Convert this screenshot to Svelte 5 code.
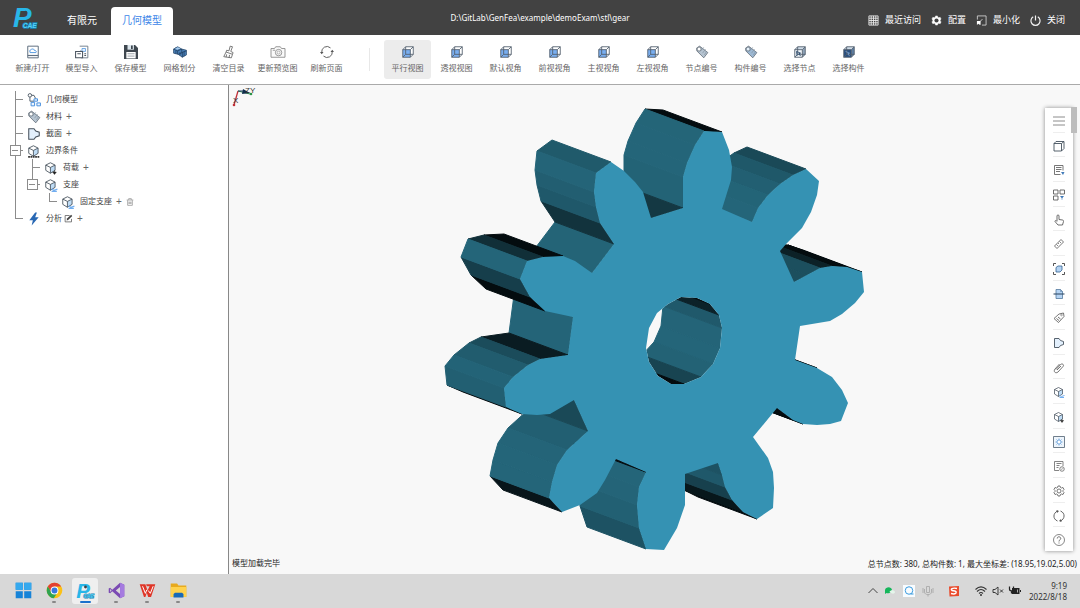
<script>
  const cube = (front, top = 'none', side = 'none') => `
    <path d="M3 8 8 3h13v13l-5 5H3z" fill="#fff"/>
    <path d="M16 8l5-5v13l-5 5z" fill="${side}"/><path d="M3 8l5-5h13l-5 5z" fill="${top}"/>
    <path d="M3 8h13v13H3z" fill="${front}"/>
    <path d="M3 8 8 3h13v13l-5 5H3zM3 8h13v13M16 8l5-5M8 3v13h13M8 16l-5 5" fill="none" stroke="#53606e" stroke-width="1.5"/>`;

  const isoCube = `
    <path d="M3 7l8-4 8 4v9l-8 5-8-5z" fill="#fff"/><path d="M11 11l8-4v9l-8 5z" fill="#bfdcf5"/>
    <path d="M3 7l8-4 8 4v9l-8 5-8-5zM3 7l8 4 8-4M11 11v10" fill="none" stroke="#47525d" stroke-width="1.5"/>`;

  const tag = (fill, hole) => `
    <path d="M3 5l5-3 14 11-7 9L3 10z" fill="${fill}" stroke="#5a6570" stroke-width="1.3"/>
    <path d="M9 11l6-7M13 14l5-7M16 17l4-6" stroke="#8493a2" stroke-width="1.2"/>
    <circle cx="7" cy="7" r="3.4" fill="${hole}" stroke="#5a6570" stroke-width="1.2"/>`;

  const section = '<path d="M3 3h9l3 4 6 2v6l-6 2-3 4H3z" fill="#e3f0fd" stroke="#46515d" stroke-width="1.8"/>';
  const cog = 'M10 2h4l1 3 2 1 3-1 2 4-2 2v2l2 2-2 4-3-1-2 1-1 3h-4l-1-3-2-1-3 1-2-4 2-2v-2L2 9l2-4 3 1 2-1z';
  const refresh = '<path d="M3 13a9 9 0 0 1 15-8M21 11a9 9 0 0 1-15 8" fill="none" stroke="#555" stroke-width="1.6"/><path d="M0 12h6l-3 4zM18 12h6l-3-4z" fill="#555"/>';

  const logo = `
    <g font-family="Liberation Sans" font-weight="bold" font-style="italic">
      <text x="-1" y="22" font-size="29" fill="#28b6e8">P</text>
      <circle cx="12" cy="7" r="2" fill="#38424a"/>
      <text x="9" y="23" font-size="7" fill="#55d0f5" stroke="#1683b5" stroke-width="1.5" paint-order="stroke">CAE</text>
    </g>`;

  const icons = {
    open: '<path d="M3 2h18v20H3z" fill="#fff" stroke="#5f6f80" stroke-width="1.7"/><path d="M7 13c-2-5 2-5 3-6 3-1 4 1 4 2 4 0 4 3 3 4z" fill="#fff" stroke="#4c94df" stroke-width="1.6"/><path d="M3 18h18" stroke="#5f6f80" stroke-width="2"/>',
    import: '<path d="M8 2h14v20H10V9" fill="#fff" stroke="#667481" stroke-width="1.5"/><path d="M12 6h6v5h-6z" fill="#e8f3ff" stroke="#4c94df" stroke-width="1.3"/><path d="M1 11h12v11H1z" fill="#fff" stroke="#4b5560" stroke-width="1.8"/><path d="M4 15h6M16 15h3M16 18h3" stroke="#4b5560" stroke-width="2"/>',
    save: '<path d="M0 0h19l5 5v19H0z" fill="#3f474f"/><path d="M6 0h11v8H6z" fill="#dce6ed"/><path d="M12 1h3v6h-3z" fill="#3f474f"/><path d="M4 12h16v11H4z" fill="#fff"/><path d="M6 15h12M6 19h12" stroke="#8a929a" stroke-width="1.4"/>',
    mesh: '<path d="M1 7l7-4 7 4 8 2v8l-7 4-7-5-8-2z" fill="#4a80b8" stroke="#28486a" stroke-width="1.3"/><path d="M1 7l7 3 7-3M8 10v6M15 7v6l8-3M9 16l7-3v8M4 5l7 3M5 9v6M19 11v8M12 12v6" fill="none" stroke="#1d3a59" stroke-width="1.2"/><path d="M8 4l5 2-5 2-5-1z" fill="#a9cdef"/>',
    clean: '<path d="M14 2l4 1-3 8 4 2-1 3L7 12l1-3 4 1z" fill="#fff" stroke="#6a6a6a" stroke-width="1.5"/><path d="M7 12l-4 8 13 2 2-6M8 16l-1 5M13 17l-1 5" fill="none" stroke="#6a6a6a" stroke-width="1.5"/>',
    camera: '<path d="M0 6h6l2-3h8l2 3h6v15H0z" fill="#fafafa" stroke="#8a8a8a" stroke-width="1.5"/><circle cx="13" cy="13" r="5.5" fill="none" stroke="#8a8a8a" stroke-width="1.5"/><circle cx="13" cy="13" r="2.5" fill="none" stroke="#8a8a8a"/><path d="M3 9h4" stroke="#8a8a8a" stroke-width="1.4"/>',
    refresh,
    view: cube('#79aef0'),
    nodeTag: tag('#b6c4d1', '#fff'),
    partTag: tag('#9db9d4', '#e6f1fb'),
    pickNode: cube('#f2f6fa', '#cfdce8', '#8ea3b8') + '<path d="M6 11l7 3-3 1 3 4M6 11l1 7 2-2" fill="none" stroke="#2d4d70" stroke-width="1.6"/>',
    pickPart: cube('#284f80', '#cfdce8', '#5c7da1') + '<path d="M6 11l7 3-3 1 3 4" fill="none" stroke="#8fb2db" stroke-width="1.2"/>',
    recent: '<path d="M2 2h20v20H2zM7 2v20M12 2v20M17 2v20M2 7h20M2 12h20M2 17h20" fill="none" stroke="#ececec" stroke-width="1.9"/>',
    config: `<path d="${cog}" fill="#fff" stroke="#fff"/><circle cx="12" cy="12" r="4.5" fill="#424242"/>`,
    minimize: '<path d="M3 10V2h19v20h-9" fill="none" stroke="#d8d8d8" stroke-width="1.8"/><path d="M2 13h8v8H8l-3-2-3 3z" fill="#fff"/><path d="M9 14l5-5" stroke="#fff" stroke-width="1.6"/>',
    power: '<path d="M7 4a10 10 0 1 0 10 0M12 1v11" fill="none" stroke="#f2f2f2" stroke-width="2.6"/>',
    geometry: '<circle cx="5" cy="4" r="3" fill="#fff" stroke="#4d5a66" stroke-width="1.6"/><path d="M5 7v7h7M8 4h4l3 6" fill="none" stroke="#4d5a66" stroke-width="1.6"/><path d="M12 10h6v4h-6zM7 16h6v6H7zM17 17h6v5h-6z" fill="#eef6ff" stroke="#4a91de" stroke-width="1.7"/>',
    section,
    boundary: isoCube + '<path d="M2 22h20" stroke="#333" stroke-width="3" stroke-dasharray="3 1"/>',
    load: isoCube + '<path d="M18 16v4M15 19h6l-3 4z" fill="#222" stroke="#222"/>',
    support: isoCube + '<path d="M13 19l4 2 6-2M13 23h9" fill="none" stroke="#72aef0" stroke-width="2"/>',
    bolt: '<path d="M14 1 4 14h6L8 23 20 9h-6l3-8z" fill="#2868b4"/>',
    edit: '<path d="M15 4H3v17h17v-8" fill="none" stroke="#555" stroke-width="2"/><path d="M7 17l1-5L19 2l3 3-11 11z" fill="#444"/>',
    trash: '<path d="M2 6h20M8 5V2h8v3M5 7v15h14V7M9 11v7M12 11v7M15 11v7" fill="none" stroke="#777" stroke-width="1.8"/>',
    menu: '<path d="M0 4h24M0 12h24M0 20h24" stroke="#707070" stroke-width="1.6"/>',
    box: '<path d="M2 7h15v15H2zM2 7l4-4h16l-5 4M22 3v14l-5 5" fill="#fff" stroke="#45525f" stroke-width="1.8"/>',
    list: '<path d="M20 13V3H3v18h12M6 7h11M6 11h11M6 15h8" fill="none" stroke="#555" stroke-width="1.6"/><path d="M16 16h7l-3 6z" fill="#3f79b8"/>',
    grid: '<path d="M1 2h9v8H1zM14 2h9v8h-9zM1 14h9v8H1z" fill="#fff" stroke="#555" stroke-width="1.7"/><path d="M14 14h8l-4 5z" fill="#3f79b8"/><path d="M18 17v5" stroke="#3f79b8"/>',
    hand: '<path d="M8 14V4c0-3 4-3 4 0v7l7 1c2 0 2 2 2 3l-2 7h-9l-6-7c0-3 3-2 4 0" fill="none" stroke="#555" stroke-width="1.7"/>',
    ruler: '<path d="M3 16 16 3l5 5L8 21z" fill="#fff" stroke="#555" stroke-width="1.6"/><path d="M7 13l3 3M10 10l2 2M13 7l3 3" stroke="#555" stroke-width="1.4"/>',
    focus: '<path d="M1 6V1h5M18 1h5v5M23 18v5h-5M6 23H1v-5" fill="none" stroke="#444" stroke-width="1.8"/><path d="M6 9l4-3h8v8l-4 4H6z" fill="#b5d4f4" stroke="#35628f" stroke-width="1.6"/>',
    clip: '<path d="M6 3h9l4 4v14H6z" fill="#b5d4f4" stroke="#4c7398" stroke-width="1.5"/><path d="M1 12h22" stroke="#344e68" stroke-width="2.2"/><path d="M15 3v4h4" fill="none" stroke="#4c7398"/>',
    label: '<path d="M2 13 12 4l9-2 1 7-11 12z" fill="#fff" stroke="#555" stroke-width="1.6"/><path d="M7 13l5 4M10 10l5 4" stroke="#555" stroke-width="1.7"/><circle cx="17" cy="6" r="1.7" fill="none" stroke="#555"/>',
    attach: '<path d="M6 15 15 5c4-3 8 1 5 4L10 20c-5 4-10-1-6-6L13 4M8 16l8-8" fill="none" stroke="#666" stroke-width="1.8"/>',
    gearBox: '<path d="M1 1h22v22H1z" fill="#eef5fc" stroke="#576879" stroke-width="1.7"/><circle cx="12" cy="12" r="4" fill="#fff" stroke="#5c9ad8" stroke-width="1.5"/><path d="M12 5v3M12 16v3M5 12h3M16 12h3M7 7l2 2M15 15l2 2M17 7l-2 2M9 15l-2 2" stroke="#5c9ad8" stroke-width="1.5"/>',
    report: '<path d="M20 12V3H3v18h9M7 7h10M7 11h6M7 15h4" fill="none" stroke="#666" stroke-width="1.6"/><circle cx="18" cy="18" r="4.5" fill="#fff" stroke="#666" stroke-width="1.6"/><path d="M16 18l2 1 2-3" fill="none" stroke="#666"/>',
    settings: `<path d="${cog}" fill="none" stroke="#555" stroke-width="1.6"/><circle cx="12" cy="12" r="4" fill="none" stroke="#555" stroke-width="1.6"/>`,
    rotate: '<path d="M9 22C-1 18 0 6 9 2M15 2c10 4 9 16 0 20" fill="none" stroke="#555" stroke-width="1.8"/><path d="M7 0l5 2-4 4zM17 24l-5-2 4-4z" fill="#555"/>',
    help: '<circle cx="12" cy="12" r="11" fill="none" stroke="#555" stroke-width="1.4"/><path d="M8.5 9c0-5 7-4 7 0 0 3-3.5 2-3.5 6M12 17v2" fill="none" stroke="#555" stroke-width="1.7"/>',
    logo,
    windows: '<path d="M1 1h10v10H1zM13 1h10v10H13zM1 13h10v10H1zM13 13h10v10H13z" fill="#1683d8"/><path d="M1 1h10v10H1zM13 1h10v10H13z" fill="#35a9ee"/>',
    chrome: '<circle cx="12" cy="12" r="11" fill="#fbc116"/><path d="M2.5 6.500a11 11 0 0 1 19 0H12L7 14z" fill="#e34133"/><path d="M2.5 6.500A11 11 0 0 0 11 23l5-8-8 0z" fill="#30a350"/><circle cx="12" cy="12" r="5.5" fill="#fff"/><circle cx="12" cy="12" r="4.2" fill="#3878dc"/>',
    studio: '<path d="M17 1l6 3v16l-6 3L6 13l-3 3-2-1V9l2-1 3 3z" fill="#7b4bb3"/><path d="M17 7v10l-6-5zM3 10v4l2-2z" fill="#d8d8d8"/><path d="M17 1l6 3v16l-6 3z" fill="#a57be0"/>',
    wps: '<path d="M1 3h8l3 9 3-6h-4l-1-3h13l-6 18h-4l-2-6-2 6H7z" fill="#df3527"/><path d="M5 6l4 10 2-5M13 12l3 4 4-10" fill="none" stroke="#fff" stroke-width="1.4"/>',
    folder: '<path d="M1 2h9l2 3h11v16H1z" fill="#e8a91d"/><path d="M1 7h22v14H1z" fill="#ffd24d"/><path d="M5 22v-5l2-2h10l2 2v5z" fill="#1769b8"/>',
    up: '<path d="M3 16l9-9 9 9" fill="none" stroke="#444" stroke-width="2"/>',
    chat: '<path d="M2 10c1-7 13-8 14 0-1 7-7 7-11 6l-3 2z" fill="#16b65b"/><path d="M11 14c1-5 10-5 11 0-1 4-5 5-11 0z" fill="#e5f5eb"/>',
    search: '<path d="M0 0h24v24H0z" fill="#f8fcff"/><circle cx="12" cy="11" r="7.5" fill="none" stroke="#3b9bde" stroke-width="2"/><path d="M15 18h6" stroke="#3b9bde" stroke-width="2"/>',
    mic: '<path d="M9 3h6v12H9zM5 8v6c0 7 14 7 14 0V8M12 19v4M2 6v10M22 6v10" fill="none" stroke="#aaa" stroke-width="1.8"/>',
    sogou: '<path d="M2 3l20-1v20L3 23z" fill="#e94b2c"/><path d="M18 7C9 5 4 8 8 11c5 1 10 1 8 5-2 2-7 2-10 1" fill="none" stroke="#fff" stroke-width="2.8"/>',
    wifi: '<path d="M1 9c7-7 15-7 22 0M4 13c5-5 11-5 16 0M8 17c3-3 5-3 8 0" fill="none" stroke="#333" stroke-width="2.2"/><circle cx="12" cy="20" r="2" fill="#333"/>',
    mute: '<path d="M2 9h4l6-5v16l-6-5H2zM16 9l6 6M22 9l-6 6" fill="none" stroke="#333" stroke-width="1.9"/>',
    battery: '<path d="M6 6h15v12H6zM22 10h2v4h-2z" fill="#222"/><path d="M1 3v5c0 5 8 5 8 0V3M5 12v5" fill="none" stroke="#222" stroke-width="2.5"/><path d="M17 9v6" stroke="#ddd" stroke-width="1.5"/>'
  };

  const actions = [
    ['open', '新建/打开'],
    ['import', '模型导入'],
    ['save', '保存模型'],
    ['mesh', '网格划分'],
    ['clean', '清空目录'],
    ['camera', '更新预览图'],
    ['refresh', '刷新页面']
  ];

  const views = [
    ['view', '平行视图'],
    ['view', '透视视图'],
    ['view', '默认视角'],
    ['view', '前视视角'],
    ['view', '主视视角'],
    ['view', '左视视角'],
    ['nodeTag', '节点编号'],
    ['partTag', '构件编号'],
    ['pickNode', '选择节点'],
    ['pickPart', '选择构件']
  ];

  const system = [
    ['recent', '最近访问'],
    ['config', '配置'],
    ['minimize', '最小化'],
    ['power', '关闭']
  ];

  // guides: one shape per indent column
  const guides = {
    none: '',
    line: 'M8 0v17',
    tee: 'M8 0v17M8 8h8',
    end: 'M8 0v8h8',
    box: 'M8 0v3M8 13v4M13 8h3M3 3h10v10H3zM5 8h6',
    boxEnd: 'M8 0v3M13 8h3M3 3h10v10H3zM5 8h6'
  };

  const tree = [
    { name: '几何模型', icon: 'geometry', cols: ['tee'] },
    { name: '材料', icon: 'nodeTag', cols: ['tee'], add: true },
    { name: '截面', icon: 'section', cols: ['tee'], add: true },
    { name: '边界条件', icon: 'boundary', cols: ['box'] },
    { name: '荷载', icon: 'load', cols: ['line', 'tee'], add: true },
    { name: '支座', icon: 'support', cols: ['line', 'boxEnd'] },
    { name: '固定支座', icon: 'support', cols: ['line', 'none', 'end'], add: true, remove: true },
    { name: '分析', icon: 'bolt', cols: ['end'], edit: true, add: true }
  ];

  const tools = [
    'menu', 'box', 'list', 'grid', 'hand', 'ruler', 'focus', 'clip', 'label',
    'section', 'attach', 'support', 'load', 'gearBox', 'report', 'settings', 'rotate', 'help'
  ];

  const apps = ['windows', 'chrome', 'logo', 'studio', 'wps', 'folder'];
  const tray = ['up', 'chat', 'search', 'mic', 'sogou', 'wifi', 'mute', 'battery'];

  // front face of the gear, clockwise
  const outline = [
    [683, 208], [683, 177], [687, 163], [695, 145], [704, 131], [722, 132], [729, 150], [732, 167], [731, 180], [722, 209],
    [752, 222], [758, 208], [768, 195], [780, 184], [793, 175], [806, 169], [819, 181], [817, 195], [811, 212], [802, 228], [787, 243], [780, 251],
    [794, 282], [807, 275], [820, 268], [832, 266], [847, 267], [862, 272], [864, 292], [855, 303], [842, 314], [830, 321], [800, 326],
    [795, 360], [817, 368], [832, 377], [842, 390], [848, 403], [841, 421], [830, 424], [817, 425], [803, 424], [793, 420], [777, 408],
    [753, 437], [768, 458], [773, 472], [774, 488], [773, 508], [757, 519], [743, 512], [732, 500], [725, 487], [722, 475], [718, 463],
    [685, 474], [685, 505], [677, 528], [664, 550], [646, 549], [639, 528], [637, 505], [639, 487], [646, 472],
    [616, 459], [605, 480], [597, 493], [580, 505], [562, 512], [549, 498], [552, 482], [557, 465], [567, 450], [588, 431],
    [574, 400], [550, 414], [537, 415], [522, 414], [506, 407], [504, 388], [513, 377], [528, 365], [540, 359], [568, 355],
    [573, 317], [545, 311], [530, 297], [520, 279], [527, 261], [543, 257], [563, 256], [575, 261], [592, 273],
    [614, 244], [600, 223], [596, 207], [594, 192], [596, 173], [611, 162], [624, 171], [635, 182], [643, 192], [651, 218]
  ];

  const bore = [
    [646, 348], [649, 362], [658, 376], [671, 384], [684, 384], [701, 377], [713, 364], [720, 348],
    [722, 328], [719, 315], [710, 304], [697, 298], [681, 297], [668, 304], [657, 313], [649, 328]
  ];

  const depth = [-59, -22];
  const length = Math.hypot(...depth);

  // side walls that face the camera, the far ones first
  function walls(points) {
    return points
      .map((a, i) => {
        const b = points[(i + 1) % points.length];
        const cross = (b[0] - a[0]) * depth[1] - (b[1] - a[1]) * depth[0];
        const facing = -cross / (Math.hypot(b[0] - a[0], b[1] - a[1]) * length);
        const light = Math.max(0.12, 1 - Math.pow(Math.min(1, (1 - facing) / 0.64), 1.6));
        return {
          facing,
          order: (a[0] + b[0]) * depth[0] + (a[1] + b[1]) * depth[1],
          color: `rgb(${[36, 101, 121].map((c) => Math.round(c * light)).join(',')})`,
          points: [a, b, [b[0] + depth[0], b[1] + depth[1]], [a[0] + depth[0], a[1] + depth[1]]].join(' ')
        };
      })
      .filter((wall) => wall.facing > 0)
      .sort((a, b) => a.order - b.order);
  }

  const outerWalls = walls(outline);
  const boreWalls = walls(bore);
  const face = `M${outline.join('L')}ZM${bore.join('L')}Z`;

  let activeView = $state(0);
</script>

{#snippet icon(name)}
  <svg class="icon" viewBox="0 0 24 24" aria-hidden="true">{@html icons[name]}</svg>
{/snippet}

<div class="app">
  <header>
    <div class="brand">{@render icon('logo')}</div>
    <nav>
      <button>有限元</button>
      <button class="current">几何模型</button>
    </nav>
    <h1>D:\GitLab\GenFea\example\demoExam\stl\gear</h1>
    <div class="system">
      {#each system as [name, label]}
        <button>{@render icon(name)}{label}</button>
      {/each}
    </div>
  </header>

  <div class="toolbar">
    {#each actions as [name, label]}
      <button>{@render icon(name)}<span>{label}</span></button>
    {/each}
    <i class="divider"></i>
    {#each views as [name, label], i}
      <button class:active={activeView === i} onclick={() => (activeView = i)}>
        {@render icon(name)}<span>{label}</span>
      </button>
    {/each}
  </div>

  <main>
    <aside>
      <ul>
        {#each tree as node}
          <li>
            {#each node.cols as col}
              <svg class="guide" viewBox="0 0 17 17"><path d={guides[col]} /></svg>
            {/each}
            {@render icon(node.icon)}
            <span>{node.name}</span>
            {#if node.edit}<button class="edit" aria-label="编辑">{@render icon('edit')}</button>{/if}
            {#if node.add}<button class="add">+</button>{/if}
            {#if node.remove}<button aria-label="删除">{@render icon('trash')}</button>{/if}
          </li>
        {/each}
      </ul>
    </aside>

    <section class="viewport">
      <svg class="scene" viewBox="229 85 851 489" role="img" aria-label="gear">
        <clipPath id="bore"><polygon points={bore.join(' ')} /></clipPath>
        {#each outerWalls as wall}
          <polygon points={wall.points} fill={wall.color} stroke={wall.color} />
        {/each}
        <g clip-path="url(#bore)">
          <rect x="640" y="290" width="90" height="100" fill="#f8f8f8" />
          {#each boreWalls as wall}
            <polygon points={wall.points} fill={wall.color} stroke={wall.color} />
          {/each}
        </g>
        <path d={face} fill="#3592b3" fill-rule="evenodd" />
      </svg>

      <svg class="axes" viewBox="0 0 28 24">
        <path d="M6 4 2 18" stroke="#c03038" stroke-width="1.3" />
        <circle cx="2" cy="18" r="1.3" fill="#c03038" />
        <path d="M6 4l12 3" stroke="#2a9348" />
        <path d="M6 4h5l4 1" stroke="#20365e" fill="none" />
        <path d="M11 2l7 4-8 1z" fill="#102d4e" />
        <circle cx="19" cy="7" r="1.3" fill="#2a9348" />
        <text x="1" y="16">X</text>
        <text x="13" y="6">ZY</text>
      </svg>

      <div class="tools">
        {#each tools as name}
          <button aria-label={name}>{@render icon(name)}</button>
        {/each}
      </div>
      <i class="handle"></i>

      <div class="status">
        <span>模型加载完毕</span>
        <span class="counts">总节点数: 380, 总构件数: 1, 最大坐标差: (18.95,19.02,5.00)</span>
      </div>
    </section>
  </main>

  <footer>
    <div class="apps">
      {#each apps as name, i}
        <button class:open={i > 0} class:focused={name === 'logo'} aria-label={name}>
          {@render icon(name)}
        </button>
      {/each}
    </div>
    <div class="tray">
      {#each tray as name}
        <span class={name}>{@render icon(name)}</span>
      {/each}
      <time>9:19<br />2022/8/18</time>
    </div>
  </footer>
</div>

<style>
  :global(body) {
    margin: 0;
  }

  .app {
    display: flex;
    flex-direction: column;
    min-height: 100vh;
    background: #fff;
    color: #444;
    font: 8px/12px "Liberation Sans", "Noto Sans CJK SC", sans-serif;
  }

  button {
    margin: 0;
    padding: 0;
    border: 0;
    background: none;
    color: inherit;
    font: inherit;
    white-space: nowrap;
  }

  .icon {
    display: block;
    flex: none;
    width: 14px;
    height: 14px;
    overflow: visible;
  }

  header {
    display: grid;
    grid-template-columns: 1fr auto 1fr;
    align-items: center;
    height: 35px;
    background: #424242;
    color: #fff;
    font-size: 9px;
  }

  .brand {
    grid-area: 1 / 1;
    padding-left: 14px;
  }

  .brand .icon {
    width: 23px;
    height: 23px;
  }

  nav {
    display: flex;
    grid-area: 1 / 1;
    align-self: end;
    padding-left: 53px;
    font-size: 10px;
  }

  nav button {
    width: 58px;
    height: 28px;
  }

  nav .current {
    width: 62px;
    border-radius: 4px 4px 0 0;
    background: #fff;
    color: #3e86e8;
  }

  h1 {
    margin: 0;
    font: 8px/12px "Noto Sans", sans-serif;
  }

  .system {
    display: flex;
    gap: 10px;
    justify-content: flex-end;
    padding: 5px 15px 0 0;
  }

  .system button {
    display: flex;
    gap: 6px;
    align-items: center;
  }

  .system .icon {
    width: 11px;
    height: 11px;
  }

  .toolbar {
    display: flex;
    gap: 2px;
    padding: 5px 9px;
    border-bottom: 1px solid #aaa;
  }

  .toolbar button {
    display: flex;
    flex-direction: column;
    gap: 4px;
    align-items: center;
    width: 47px;
    height: 39px;
    padding-top: 5px;
    border-radius: 3px;
    color: #666;
  }

  .toolbar .active {
    background: #ececec;
  }

  .divider {
    width: 1px;
    margin: 8px 12px 8px 17px;
    background: #e8e8e8;
  }

  main {
    display: flex;
    flex: 1;
  }

  aside {
    flex: none;
    width: 228px;
    border-right: 1px solid #888;
  }

  ul {
    margin: 0;
    padding: 6px 0 0 7px;
    list-style: none;
  }

  li {
    display: flex;
    align-items: center;
    height: 17px;
  }

  li > .icon {
    margin: 0 5px 0 3px;
  }

  li button {
    margin-left: 4px;
    color: #666;
  }

  li button .icon {
    width: 8px;
    height: 8px;
  }

  li .edit {
    margin-left: 2px;
  }

  li .edit .icon {
    width: 9px;
    height: 9px;
  }

  li .add {
    font-size: 10px;
  }

  .guide {
    width: 17px;
    height: 17px;
    fill: none;
    stroke: #8c8c8c;
    shape-rendering: crispEdges;
  }

  .viewport {
    position: relative;
    display: flex;
    flex: 1;
    flex-direction: column;
    justify-content: flex-end;
    background: #f8f8f8;
  }

  .scene {
    position: absolute;
    inset: 0;
    width: 100%;
    height: 100%;
  }

  .axes {
    position: absolute;
    top: 2px;
    left: 3px;
    width: 28px;
    height: 24px;
    overflow: visible;
    font-size: 8px;
    fill: #333;
  }

  .tools {
    position: absolute;
    top: 23px;
    right: 7px;
    bottom: 23px;
    display: flex;
    flex-direction: column;
    width: 28px;
    background: #fff;
    box-shadow: 0 0 4px #888;
  }

  .tools button {
    display: flex;
    flex: 1;
    align-items: center;
    justify-content: center;
    margin: 0 8px;
    padding-top: 2px;
    border-bottom: 1px solid #eee;
  }

  .tools button:last-child {
    border: 0;
  }

  .tools .icon {
    width: 12px;
    height: 12px;
  }

  .handle {
    position: absolute;
    top: 22px;
    right: 3px;
    width: 6px;
    height: 26px;
    background: #bdbdbd;
  }

  .status {
    display: flex;
    justify-content: space-between;
    padding: 0 3px 4px;
    color: #222;
  }

  .counts {
    font-family: "Noto Sans", "Noto Sans CJK SC", sans-serif;
  }

  footer {
    display: flex;
    justify-content: space-between;
    height: 34px;
    background: #d8d8d8;
  }

  .apps {
    display: flex;
    gap: 5px;
    align-items: center;
    padding-left: 10px;
  }

  .apps button {
    display: flex;
    flex-direction: column;
    gap: 2px;
    align-items: center;
    width: 26px;
    height: 26px;
    padding-top: 4px;
    border-radius: 3px;
  }

  .apps .icon {
    width: 17px;
    height: 17px;
  }

  .apps .open::after {
    width: 4px;
    height: 2px;
    border-radius: 1px;
    background: #888;
    content: "";
  }

  .apps .focused {
    background: #efefef;
  }

  .apps .focused::after {
    width: 11px;
    background: #1b70cc;
  }

  .tray {
    display: flex;
    gap: 5px;
    align-items: center;
    padding-right: 13px;
    color: #333;
  }

  .tray .icon {
    width: 12px;
    height: 12px;
  }

  .tray .search,
  .tray .mic {
    margin-left: 2px;
  }

  .tray .sogou {
    margin: 0 10px 0 9px;
  }

  time {
    margin-left: 3px;
    font: 8px/11px "Noto Sans", sans-serif;
    text-align: right;
  }
</style>
